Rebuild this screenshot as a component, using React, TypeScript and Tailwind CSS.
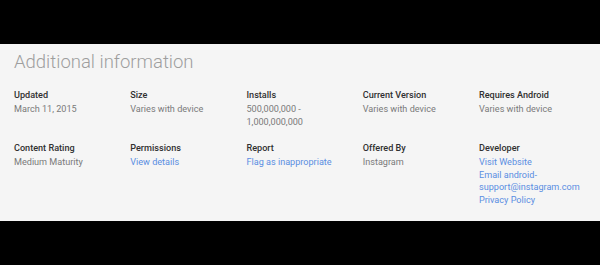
import React from 'react';

type Item = {
  label: string;
  values: string[];
  link?: boolean;
};

const rows: Item[][] = [
  [
    { label: 'Updated', values: ['March 11, 2015'] },
    { label: 'Size', values: ['Varies with device'] },
    { label: 'Installs', values: ['500,000,000 -', '1,000,000,000'] },
    { label: 'Current Version', values: ['Varies with device'] },
    { label: 'Requires Android', values: ['Varies with device'] },
  ],
  [
    { label: 'Content Rating', values: ['Medium Maturity'] },
    { label: 'Permissions', values: ['View details'], link: true },
    { label: 'Report', values: ['Flag as inappropriate'], link: true },
    { label: 'Offered By', values: ['Instagram'] },
    {
      label: 'Developer',
      values: ['Visit Website', 'Email android-', 'support@instagram.com', 'Privacy Policy'],
      link: true,
    },
  ],
];

const InfoCell: React.FC<{ item: Item }> = ({ item }) => (
  <div className="flex flex-col">
    <div className="font-medium text-[#303030]">{item.label}</div>
    <div className="mt-[1.5px] flex flex-col">
      {item.values.map((v) => (
        <div key={v} className={item.link ? 'text-[#5a8ee2]' : 'text-[#7a7a7a]'}>
          {v}
        </div>
      ))}
    </div>
  </div>
);

export default function App() {
  return (
    <div
      className="flex h-[265px] w-[600px] flex-col bg-black"
      style={{ fontFamily: 'Roboto, "Liberation Sans", sans-serif' }}
    >
      <div className="h-[44px]" />
      <section className="bg-[#f5f5f5] pl-[14px] pt-[5.5px] pb-[14.2px]">
        <h2 className="text-[18.5px] font-light leading-[24px] text-[#9e9e9e]">
          Additional information
        </h2>
        <div className="mt-[15px] flex flex-col gap-y-[13.3px] text-[9.1px] leading-[12.75px]">
          {rows.map((row, i) => (
            <div key={i} className="grid grid-cols-[repeat(5,116.25px)]">
              {row.map((item) => (
                <InfoCell key={item.label} item={item} />
              ))}
            </div>
          ))}
        </div>
      </section>
    </div>
  );
}
